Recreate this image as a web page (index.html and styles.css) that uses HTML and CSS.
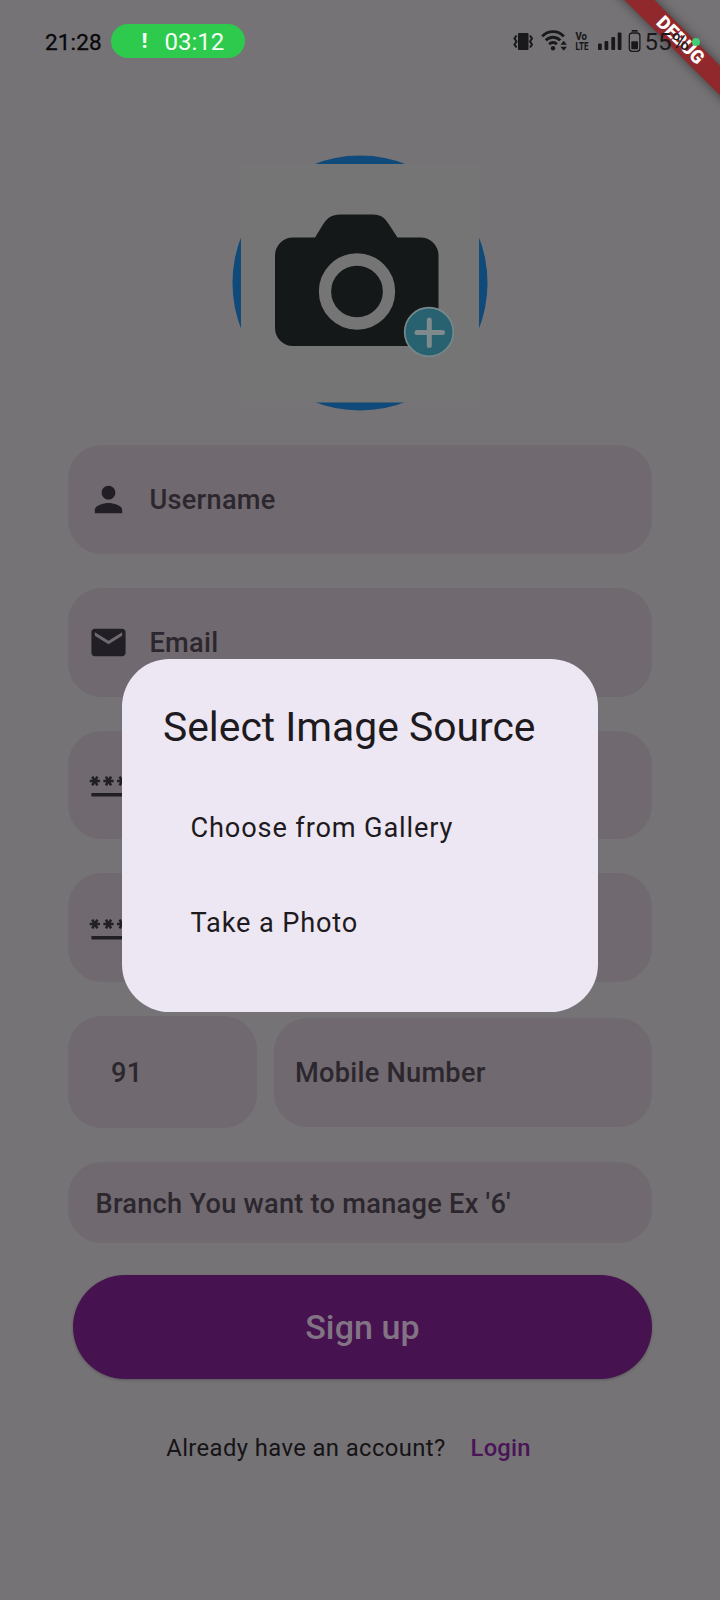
FILE: index.html
```html
<!DOCTYPE html>
<html lang="en">
<head>
<meta charset="utf-8">
<title>Sign up</title>
<link rel="stylesheet" href="styles.css">
</head>
<body>
<div class="screen">
  <div class="banner"><span>DEBUG</span></div>
  <header class="status">
    <span class="clock">21:28</span>
    <div class="call"><b class="mark">!</b><span>03:12</span></div>
    <div class="tray">
      <svg class="tray-icons" width="130" height="32" viewBox="0 0 130 32">
        <g fill="#19181b">
          <rect x="5" y="7" width="10.500" height="17" rx="1"/>
          <path d="M3.500 9.500L1.500 12.500l2 3-2 3 2 3M17 9.500l2 3-2 3 2 3-2 3" fill="none" stroke="#19181b" stroke-width="2"/>
          <g transform="translate(-3.500 -.8)">
            <g fill="none" stroke="#19181b" stroke-width="2.900">
              <path d="M32.700 11.200a14.500 14.500 0 0 1 21.600 0"/>
              <path d="M36.300 15.200a9.700 9.700 0 0 1 14.400 0"/>
              <path d="M39.700 19a5.200 5.200 0 0 1 7.600 0"/>
            </g>
            <circle cx="43.500" cy="23" r="2.200"/>
            <path d="M51 19.500l3.200-4 3.200 4zM51 21.500h6.400l-3.200 4z"/>
          </g>
          <text x="62.500" y="14.300" class="volte" textLength="11.500" lengthAdjust="spacingAndGlyphs">Vo</text>
          <text x="62.500" y="24" class="volte" textLength="13" lengthAdjust="spacingAndGlyphs">LTE</text>
          <rect x="85" y="17.500" width="3.800" height="6.500" rx="1"/>
          <rect x="91.500" y="15" width="3.800" height="9" rx="1"/>
          <rect x="98.300" y="11" width="3.800" height="13" rx="1"/>
          <rect x="104.700" y="6.500" width="3.800" height="17.500" rx="1"/>
          <rect x="116.300" y="7" width="10.600" height="18.300" rx="3" fill="none" stroke="#19181b" stroke-width="1.300"/>
          <rect x="118.700" y="4" width="6" height="1.700"/>
          <rect x="118.300" y="15.300" width="6.700" height="8" rx="1"/>
        </g>
      </svg>
      <span class="percent">55%</span>
      <i class="dot"></i>
    </div>
  </header>

  <main class="form">
    <svg class="avatar" width="256" height="256" viewBox="232 155.500 256 256">
      <circle cx="360" cy="283.500" r="127.500" fill="#0f4a7a"/>
      <rect x="241" y="164.500" width="238" height="238.500" fill="#757575"/>
      <path fill="#141819" d="M293 238h22l8-13c4-6.500 9-10 17-10h33c8 0 12 3.500 16 10l8.500 13H420.500a18 18 0 0 1 18 18v72.500a18 18 0 0 1-18 18H293a18 18 0 0 1-18-18V256a18 18 0 0 1 18-18z"/>
      <circle cx="357" cy="292" r="32" fill="none" stroke="#757575" stroke-width="12.300"/>
      <circle cx="429" cy="332.500" r="24.300" fill="#286271" stroke="#75888c" stroke-width="1.700"/>
      <path d="M429.300 320.500v25.500M417 333h25.500" stroke="#7f8a8d" stroke-width="5" stroke-linecap="round"/>
    </svg>

    <div class="fields">
      <label class="field">
        <svg width="41" height="41" viewBox="0 0 24 24"><path d="M12 12c2.210 0 4-1.790 4-4s-1.790-4-4-4-4 1.790-4 4 1.790 4 4 4zm0 2c-2.670 0-8 1.340-8 4v2h16v-2c0-2.660-5.330-4-8-4z"/></svg>
        <span>Username</span>
      </label>
      <label class="field">
        <svg width="41" height="41" viewBox="0 0 24 24"><path d="M20 4H4c-1.100 0-1.990.9-1.990 2L2 18c0 1.100.9 2 2 2h16c1.100 0 2-.9 2-2V6c0-1.100-.9-2-2-2zm0 4l-8 5-8-5V6l8 5 8-5v2z"/></svg>
        <span>Email</span>
      </label>
      <div class="field">
        <svg width="41" height="41" viewBox="0 0 24 24"><path d="M2 17h20v2H2v-2zm1.150-4.050L4 11.470l.85 1.480 1.300-.75-.85-1.480H7v-1.500H5.300l.85-1.470L4.850 7 4 8.470 3.150 7l-1.300.75.850 1.470H1v1.500h1.700l-.85 1.480 1.300.75zm6.700-.75l1.300.75.850-1.480.85 1.480 1.300-.75-.85-1.480H15v-1.500h-1.700l.85-1.470-1.300-.75L12 8.470 11.150 7l-1.300.75.850 1.470H9v1.500h1.700l-.85 1.480zM23 9.220h-1.700l.85-1.470-1.300-.75L20 8.470 19.150 7l-1.300.75.850 1.470H17v1.500h1.700l-.85 1.480 1.300.75.850-1.480.85 1.480 1.300-.75-.85-1.480H23v-1.500z"/></svg>
      </div>
      <div class="field">
        <svg width="41" height="41" viewBox="0 0 24 24"><path d="M2 17h20v2H2v-2zm1.150-4.050L4 11.470l.85 1.480 1.300-.75-.85-1.480H7v-1.500H5.300l.85-1.470L4.850 7 4 8.470 3.150 7l-1.300.75.850 1.470H1v1.500h1.700l-.85 1.480 1.300.75zm6.700-.75l1.300.75.850-1.480.85 1.480 1.300-.75-.85-1.480H15v-1.500h-1.700l.85-1.470-1.300-.75L12 8.470 11.150 7l-1.300.75.850 1.470H9v1.500h1.700l-.85 1.480zM23 9.220h-1.700l.85-1.470-1.300-.75L20 8.470 19.150 7l-1.300.75.850 1.470H17v1.500h1.700l-.85 1.480 1.300.75.850-1.480.85 1.480 1.300-.75-.85-1.480H23v-1.500z"/></svg>
      </div>
      <div class="phone">
        <label class="field code"><span>91</span></label>
        <label class="field mobile"><span>Mobile Number</span></label>
      </div>
      <label class="field branch"><span>Branch You want to manage Ex '6'</span></label>
    </div>

    <div class="signup">Sign up</div>
    <p class="footer"><span>Already have an account?</span><a class="login">Login</a></p>
  </main>

  <section class="dialog">
    <h1>Select Image Source</h1>
    <div class="option">Choose from Gallery</div>
    <div class="option">Take a Photo</div>
  </section>
</div>
</body>
</html>
```
FILE: styles.css
```css
* { box-sizing: border-box; }
body { margin: 0; font-family: Roboto, "Liberation Sans", sans-serif; }

.screen {
  position: relative;
  width: 720px;
  height: 1600px;
  overflow: hidden;
  background: #757376;
}

.status {
  position: relative;
  display: flex;
  align-items: center;
  height: 84px;
  padding-left: 45px;
}
.clock {
  width: 65.500px;
  font-size: 22.500px;
  line-height: 30px;
  letter-spacing: 0.150px;
  color: #08080a;
  -webkit-text-stroke: 0.300px #08080a;
}
.call {
  display: flex;
  align-items: center;
  gap: 16px;
  width: 134.500px;
  height: 34px;
  margin-top: -2px;
  padding: 2px 0 0 30px;
  border-radius: 17px;
  background: #2eca4d;
  color: #f4fff5;
  font-size: 24px;
}
.mark {
  width: 8px;
  margin-top: -3px;
  font-size: 20px;
  font-weight: 900;
  text-align: center;
}
.tray { display: flex; align-items: center; margin-left: 268px; }
.percent {
  width: 45px;
  margin-left: 1.500px;
  font-size: 24px;
  color: #19181b;
}
.volte { font: 800 11.500px Roboto, sans-serif; }
.dot {
  width: 8px;
  height: 8px;
  margin: -1px 0 0 2px;
  border-radius: 50%;
  background: #3fce73;
}

/* Corner ribbon, centred on the diagonal */
.banner {
  position: absolute;
  left: 580px;
  top: 29.800px;
  width: 200px;
  height: 21px;
  transform: rotate(45deg);
  background: #91282b;
  box-shadow: 0 0 11px rgba(0, 0, 0, 0.500);
  color: #fff;
  font-size: 18.500px;
  font-weight: 900;
  line-height: 21px;
  text-align: center;
}

.form { display: flex; flex-direction: column; align-items: center; padding-top: 71px; }
.avatar { display: block; }
.fields {
  display: flex;
  flex-direction: column;
  gap: 34px;
  width: 584px;
  margin-top: 34px;
}
.field {
  display: flex;
  align-items: center;
  gap: 20.500px;
  height: 108.800px;
  padding-left: 20px;
  border-radius: 34px;
  background: #70696f;
  color: #2c272e;
  font-size: 27.200px;
  font-weight: 500;
  letter-spacing: 0.260px;
  white-space: nowrap;
}
.field svg { display: block; fill: #211f25; }
.field span { padding-top: 1px; }
.phone { display: flex; align-items: center; gap: 17px; height: 112px; }
.code { width: 189px; height: 112px; padding-left: 43px; }
.mobile { flex: 1; padding-left: 21px; }
.branch { height: 80.500px; padding: 3px 0 0 27.500px; }

.signup {
  display: flex;
  align-items: center;
  justify-content: center;
  width: 579px;
  height: 104px;
  margin: 32.500px 0 0 5px;
  border-radius: 52px;
  background: #46124f;
  box-shadow: 0 1px 3px rgba(0, 0, 0, 0.250);
  color: #827485;
  font-size: 34px;
  font-weight: 500;
  letter-spacing: 0.100px;
}
.footer {
  display: flex;
  gap: 25px;
  margin: 53.500px 0 0;
  padding-right: 23px;
  font-size: 23.800px;
  line-height: 30px;
  letter-spacing: 0.400px;
  color: #151416;
}
.login { color: #4a1457; font-weight: 500; letter-spacing: 0.200px; }

.dialog {
  position: absolute;
  left: 122px;
  top: 659px;
  width: 476px;
  height: 353px;
  padding: 40.500px 41px;
  border-radius: 47.600px;
  background: #ede7f3;
  color: #1d1a20;
}
.dialog h1 {
  margin: 0;
  font-size: 40.800px;
  font-weight: 400;
  line-height: 54.400px;
  white-space: nowrap;
}
.option {
  height: 95.200px;
  padding-left: 27.500px;
  font-size: 27.200px;
  line-height: 95.200px;
  letter-spacing: 0.850px;
}
.dialog h1 + .option { margin-top: 27px; }
```
